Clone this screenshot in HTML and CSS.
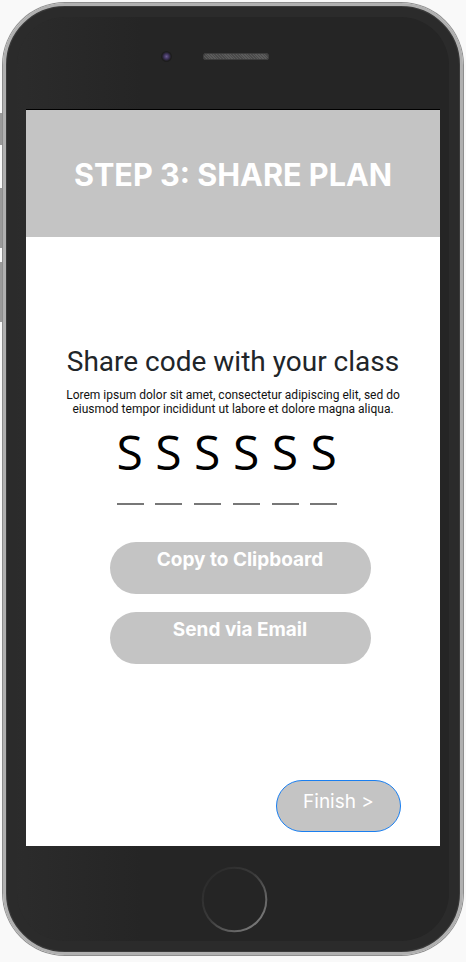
FILE: index.html
```html
<!DOCTYPE html>
<html>
<head>
<meta charset="utf-8">
<link rel="stylesheet" href="styles.css">
</head>
<body>
<div class="phone">
  <span class="side-btn side-btn-1"></span>
  <span class="side-btn side-btn-2"></span>
  <span class="side-btn side-btn-3"></span>
  <div class="hw-top">
    <span class="camera"></span>
    <span class="speaker"></span>
  </div>
  <div class="screen">
    <header class="header">
      <h1 class="title">STEP 3: SHARE PLAN</h1>
    </header>
    <main class="content">
      <h2 class="subtitle">Share code with your class</h2>
      <p class="lorem">Lorem ipsum dolor sit amet, consectetur adipiscing elit, sed do eiusmod tempor incididunt ut labore et dolore magna aliqua.</p>
      <div class="code">
        <div class="cell"><span class="char">S</span><span class="dash"></span></div>
        <div class="cell"><span class="char">S</span><span class="dash"></span></div>
        <div class="cell"><span class="char">S</span><span class="dash"></span></div>
        <div class="cell"><span class="char">S</span><span class="dash"></span></div>
        <div class="cell"><span class="char">S</span><span class="dash"></span></div>
        <div class="cell"><span class="char">S</span><span class="dash"></span></div>
      </div>
      <button class="pill">Copy to Clipboard</button>
      <button class="pill">Send via Email</button>
      <button class="finish">Finish &gt;</button>
    </main>
  </div>
  <div class="hw-bottom">
    <svg class="home" width="67" height="67" viewBox="0 0 67 67">
      <defs>
        <linearGradient id="hg" x1="0" y1="0" x2="1" y2="1">
          <stop offset="0" stop-color="#262626"/>
          <stop offset="0.45" stop-color="#3a3a3a"/>
          <stop offset="1" stop-color="#8a8a8a"/>
        </linearGradient>
      </defs>
      <circle cx="33.5" cy="33.5" r="31.8" fill="none" stroke="url(#hg)" stroke-width="2"/>
    </svg>
  </div>
</div>
</body>
</html>
```

FILE: styles.css
```css
* { box-sizing: border-box; }
html, body { margin: 0; padding: 0; }
body {
  background: #f9f9f9;
  width: 466px;
  height: 962px;
  overflow: hidden;
}
.phone {
  position: relative;
  margin: 3px 0 0 3px;
  width: 460px;
  height: 952px;
  border: 3px solid #b0b0b0;
  border-radius: 62px;
  background: linear-gradient(90deg, #2c2c2c 0%, #252525 30%, #252525 100%);
  box-shadow: 0 0 0 1px #8e8e8e, inset 0 0 0 1px #3a3a3a, inset 0 0 0 11px #2b2b2b;
  padding: 0 20px;
  display: flex;
  flex-direction: column;
}
.side-btn {
  position: absolute;
  left: -7px;
  width: 3px;
  background: #9a9a9a;
  border-radius: 1px 0 0 1px;
}
.side-btn-1 { top: 107px; height: 32px; }
.side-btn-2 { top: 182px; height: 60px; }
.side-btn-3 { top: 256px; height: 60px; }
.hw-top {
  height: 103px;
  display: flex;
  align-items: flex-start;
  padding: 45px 0 0 135px;
  gap: 31px;
}
.camera {
  width: 11px;
  height: 11px;
  border-radius: 50%;
  background: radial-gradient(circle, #6a5a90 0%, #3a3055 35%, #1c1c1c 60%, #1e1e1e 100%);
}
.speaker {
  margin-top: 2px;
  width: 66px;
  height: 7px;
  border-radius: 4px;
  background: repeating-linear-gradient(45deg, #4a4a4a 0 1px, #5c5c5c 1px 2px);
  box-shadow: inset 0 0 0 1px #3d3d3d;
}
.screen {
  width: 414px;
  height: 737px;
  background: #fff;
  border-top: 1px solid #000;
  display: flex;
  flex-direction: column;
}
.header {
  height: 127px;
  background: #c4c4c4;
  display: flex;
  align-items: center;
  justify-content: center;
}
.title {
  margin: 0;
  color: #fff;
  font-family: Inter, "Liberation Sans", sans-serif;
  font-weight: 700;
  font-size: 30.6px;
  line-height: 36px;
  padding-top: 2px;
}
.content {
  flex: 1;
  display: flex;
  flex-direction: column;
  align-items: center;
  padding-top: 108px;
}
.subtitle {
  margin: 0;
  font-family: Roboto, "Liberation Sans", sans-serif;
  font-weight: 400;
  font-size: 28px;
  line-height: 33px;
  color: #212529;
}
.lorem {
  margin: 10px 0 0;
  width: 340px;
  text-align: center;
  font-family: Roboto, "Liberation Sans", sans-serif;
  font-size: 12px;
  line-height: 14px;
  color: #111;
}
.code {
  margin: 12px 0 0 -12px;
  display: flex;
  gap: 11.8px;
}
.cell {
  width: 27px;
  display: flex;
  flex-direction: column;
}
.char {
  font-family: "Open Sans", sans-serif;
  font-size: 48px;
  line-height: 48px;
  color: #000;
}
.dash {
  margin-top: 27px;
  height: 2px;
  background: #777;
}
.pill {
  margin: 37px 0 0 14px;
  width: 261px;
  height: 52px;
  border: none;
  border-radius: 26px;
  background: #c4c4c4;
  color: #fff;
  font-family: Inter, "Liberation Sans", sans-serif;
  font-weight: 700;
  font-size: 19px;
  line-height: 24px;
  padding: 6px 0 22px;
  text-align: center;
}
.pill + .pill { margin-top: 18px; }
.finish {
  margin: auto 39px 14px auto;
  width: 125px;
  height: 52px;
  border: 1px solid #1a7ff0;
  border-radius: 26px;
  background: #c4c4c4;
  color: #fff;
  font-family: Inter, "Liberation Sans", sans-serif;
  font-weight: 400;
  font-size: 19px;
  line-height: 24px;
  padding: 0 0 8px;
  text-align: center;
}
.hw-bottom {
  flex: 1;
  display: flex;
  justify-content: center;
  padding-top: 20px;
}
.home { display: block; margin-left: 2px; }
```
